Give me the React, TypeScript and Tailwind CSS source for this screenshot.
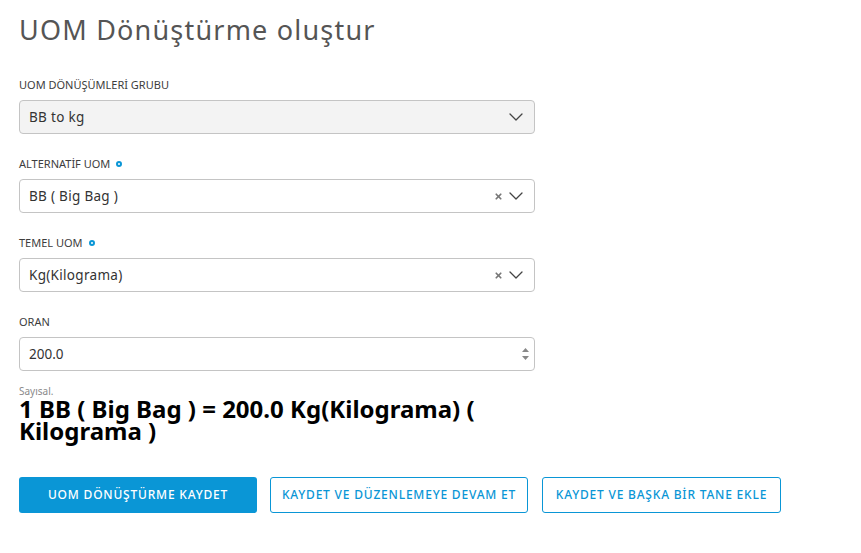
import { ChevronDown, X } from "lucide-react";

function Label({ text, required }: { text: string; required?: boolean }) {
  return (
    <div className="mb-[8px] flex h-[14px] items-center gap-[6px] text-[11px] leading-[14px] text-[#3d3d3d]">
      <span>{text}</span>
      {required && (
        <span className="inline-block h-[6px] w-[6px] rounded-full border-2 border-[#0a96d6]" />
      )}
    </div>
  );
}

function SelectBox({
  value,
  disabled,
  clearable,
}: {
  value: string;
  disabled?: boolean;
  clearable?: boolean;
}) {
  return (
    <div
      className={`flex h-[34px] items-center rounded-[4px] border border-[#c4c4c4] pl-[9px] pr-[6px] text-[13.5px] text-[#333] ${
        disabled ? "bg-[#f3f3f3]" : "bg-white"
      }`}
    >
      <span className="flex-1 tracking-[0.3px]">{value}</span>
      {clearable && (
        <X className="mr-[1px] h-[9px] w-[9px] text-[#777]" strokeWidth={4.5} />
      )}
      <ChevronDown className="h-[24px] w-[24px] text-[#444]" strokeWidth={1.3} />
    </div>
  );
}

function Field({ children }: { children: React.ReactNode }) {
  return <div className="mb-[23px]">{children}</div>;
}

export default function App() {
  return (
    <div
      className="min-h-[553px] bg-white pl-[19px] pt-[13px]"
      style={{ fontFamily: '"Noto Sans", "Open Sans", sans-serif' }}
    >
      <h1 className="mb-[31px] text-[27px] leading-[34px] tracking-[1.2px] text-[#555]">
        UOM Dönüştürme oluştur
      </h1>

      <div className="w-[516px]">
        <Field>
          <Label text="UOM DÖNÜŞÜMLERİ GRUBU" />
          <SelectBox value="BB to kg" disabled />
        </Field>
        <Field>
          <Label text="ALTERNATİF UOM" required />
          <SelectBox value="BB ( Big Bag )" clearable />
        </Field>
        <Field>
          <Label text="TEMEL UOM" required />
          <SelectBox value="Kg(Kilograma)" clearable />
        </Field>
        <div>
          <Label text="ORAN" />
          <div className="flex h-[34px] items-center rounded-[4px] border border-[#c4c4c4] bg-white pl-[9px] pr-[4px] text-[13.5px] text-[#333]">
            <span className="flex-1">200.0</span>
            <svg width="9" height="14" viewBox="0 0 9 14" className="text-[#888]">
              <path d="M4.5 1 L8 5 L1 5 Z" fill="currentColor" />
              <path d="M4.5 13 L8 9 L1 9 Z" fill="currentColor" />
            </svg>
          </div>
        </div>

        <div className="mt-[14px] text-[10px] leading-[12px] text-[#8a8a8a]">Sayısal.</div>
        <div className="mt-[1px] text-[24px] font-bold leading-[22px] text-black">
          1 BB ( Big Bag ) = 200.0 Kg(Kilograma) ( Kilograma )
        </div>
      </div>

      <div className="mt-[35px] flex gap-[13px]">
        <button className="h-[36px] w-[238px] rounded-[3px] bg-[#0a96d6] text-[12px] font-medium tracking-[0.8px] text-white">
          UOM DÖNÜŞTÜRME KAYDET
        </button>
        <button className="h-[36px] w-[258px] rounded-[3px] border border-[#0a96d6] bg-white text-[12px] font-medium tracking-[0.8px] text-[#0a96d6]">
          KAYDET VE DÜZENLEMEYE DEVAM ET
        </button>
        <button className="ml-[1px] h-[36px] w-[239px] rounded-[3px] border border-[#0a96d6] bg-white text-[12px] font-medium tracking-[0.8px] text-[#0a96d6]">
          KAYDET VE BAŞKA BİR TANE EKLE
        </button>
      </div>
    </div>
  );
}
